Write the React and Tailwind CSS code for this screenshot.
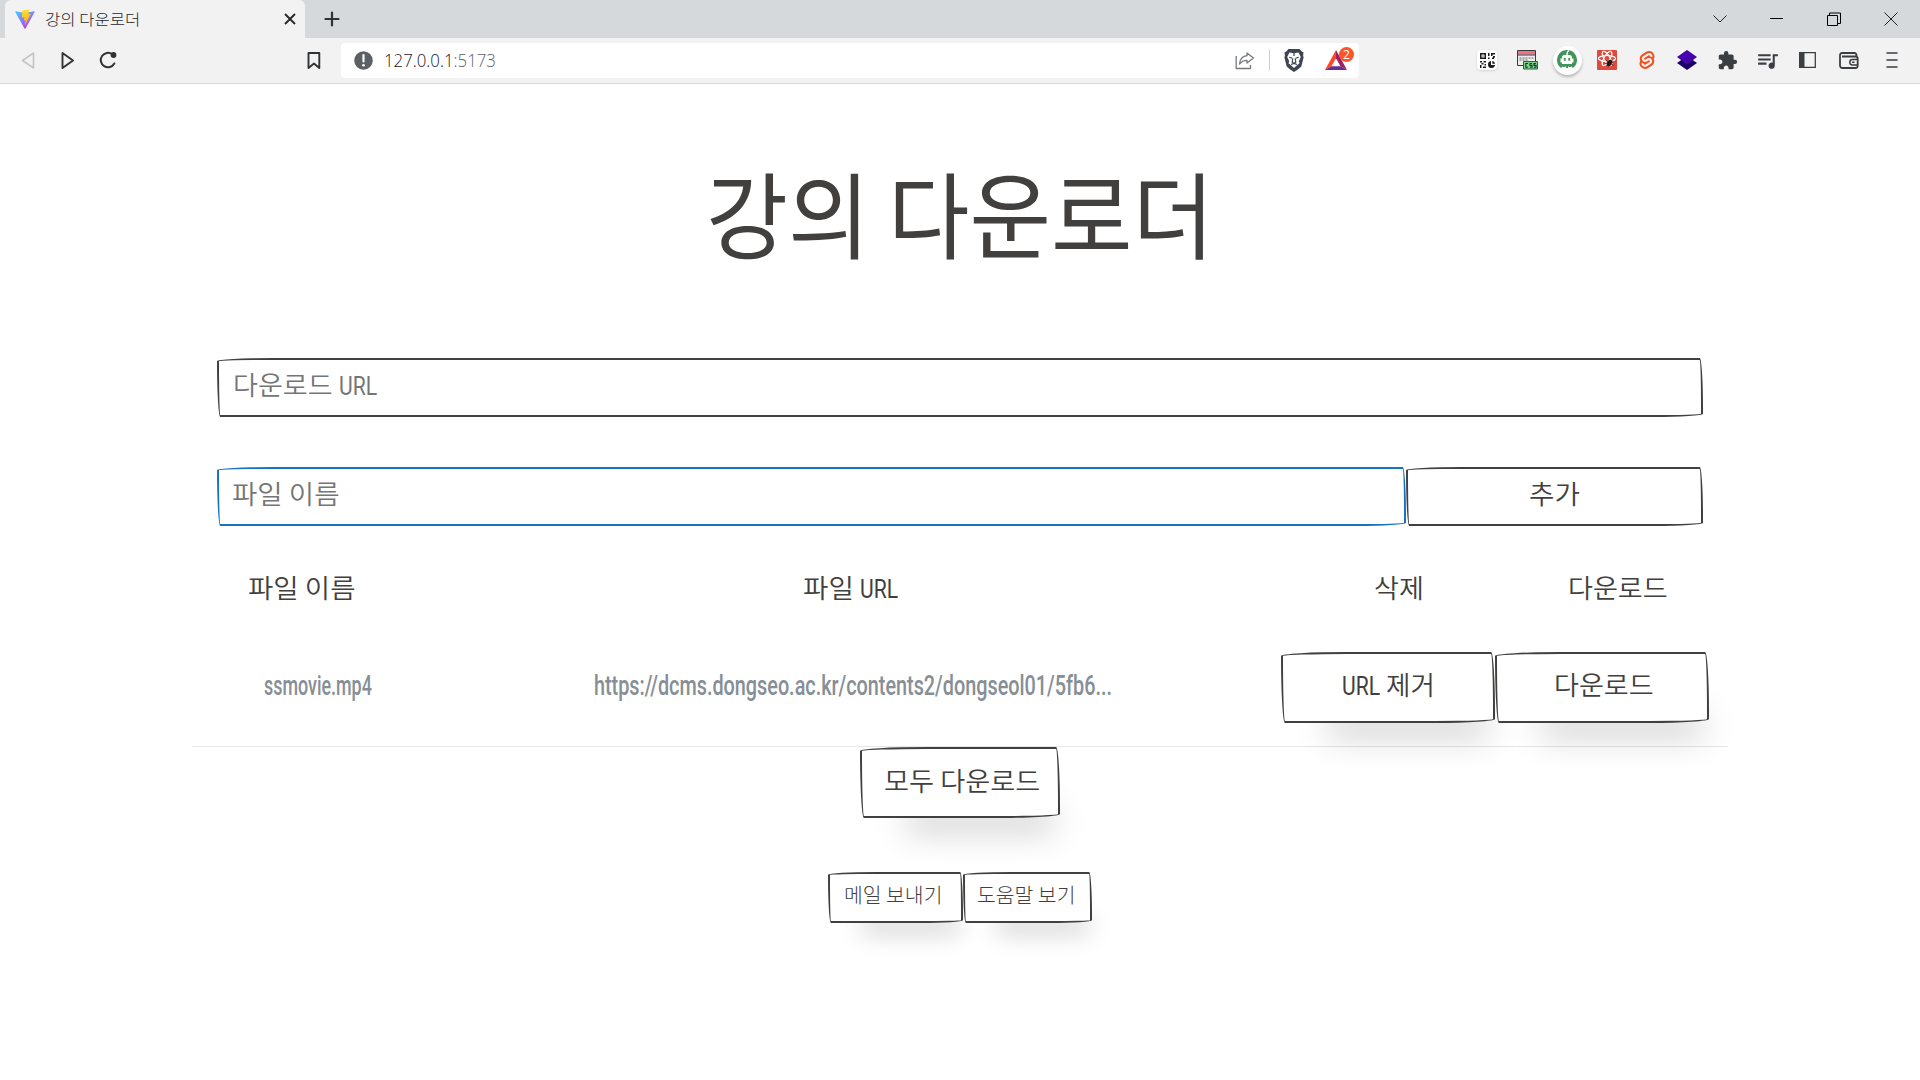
import { useLayoutEffect, useRef } from 'react';
import { SiSvelte } from 'react-icons/si';
import { MdExtension, MdQueueMusic } from 'react-icons/md';

const SKETCH = 'border-2 border-[#41403e] rounded-[255px_15px_225px_15px/15px_225px_15px_255px] bg-white';
const SHADOW = 'shadow-[15px_28px_25px_-18px_rgba(0,0,0,0.2)]';
const SHADOW_LARGE = 'shadow-[20px_38px_34px_-26px_rgba(0,0,0,0.24)]';

/* A single line of text condensed or widened to a given width. */
function Fit({ w, className = '', children }) {
  const ref = useRef(null);
  useLayoutEffect(() => {
    const el = ref.current;
    el.style.transform = `scaleX(${w / el.offsetWidth})`;
  }, [w]);
  return (
    <span className={`block shrink-0 ${className}`} style={{ width: w }}>
      <span ref={ref} className="inline-block origin-left whitespace-pre align-top">{children}</span>
    </span>
  );
}

const KO = "font-['Noto_Sans_CJK_KR',sans-serif] leading-none";
const LATIN = "font-[Roboto,sans-serif] leading-none";

function Ko({ w, children, className = '' }) {
  return <Fit w={w} className={`${KO} text-[26px] font-[350] pb-[2px] ${className}`}>{children}</Fit>;
}

function Url() {
  return <Fit w={38} className={`${LATIN} text-[25px] pt-[2px]`}>URL</Fit>;
}

function Cell({ children, className = 'w-10' }) {
  return <div className={`flex h-full shrink-0 items-center justify-center ${className}`}>{children}</div>;
}

function ViteLogo() {
  return (
    <svg width="20" height="20" viewBox="0 0 32 32">
      <defs>
        <linearGradient id="va" x1="0" y1="0" x2="0.6" y2="1"><stop stopColor="#41D1FF" /><stop offset="1" stopColor="#BD34FE" /></linearGradient>
        <linearGradient id="vb" x1="0" y1="0" x2="0" y2="1"><stop stopColor="#FFEA83" /><stop offset="0.1" stopColor="#FFDD35" /><stop offset="1" stopColor="#FFA800" /></linearGradient>
      </defs>
      <path fill="url(#va)" d="M31.2 5 16.8 31a.9.9 0 0 1-1.6 0L.6 5a.9.9 0 0 1 1-1.300l14.300 2.600h.3L30.200 3.700a.9.9 0 0 1 1 1.300Z" />
      <path fill="url(#vb)" d="M22.600 0 12 2.100a.4.4 0 0 0-.3.4L11 13.600c0 .3.2.5.5.4l3-.7c.3 0 .5.200.5.5l-.9 4.300c0 .3.200.5.5.4l1.800-.5c.3-.1.6.200.5.5l-1.400 6.800c-.1.4.5.7.7.3l.2-.3 8.700-17.300c.1-.3-.1-.6-.4-.5l-3.100.6c-.3 0-.5-.2-.5-.5L23 .5c.1-.3-.1-.5-.4-.5Z" />
    </svg>
  );
}

function TabBar() {
  return (
    <div className="flex h-[38px] bg-[#d5d9dc] pl-[5px]">
      <div className="flex w-[300px] items-center rounded-t-md bg-[#f2f2f2] pl-[10px]">
        <ViteLogo />
        <Fit w={95} className={`${KO} ml-[10px] pb-[2px] text-[15px] font-light text-[#25272c]`}>강의 다운로더</Fit>
        <svg className="ml-auto mr-[9px]" width="12" height="12" viewBox="0 0 12 12" stroke="#25282b" strokeWidth="1.9"><path d="M1 1 11 11M11 1 1 11" /></svg>
      </div>
      <Cell className="w-[54px]"><svg width="16" height="16" viewBox="0 0 16 16" stroke="#303336" strokeWidth="2.2" strokeLinecap="round"><path d="M1.500 8h13M8 1.500v13" /></svg></Cell>
      <div className="ml-auto flex">
        <Cell className="w-[57px]"><svg width="14" height="14" viewBox="0 0 14 14" fill="none" stroke="#222"><path d="m.5 3.500 6.500 6.500 6.500-6.500" /></svg></Cell>
        <Cell className="w-[57px]"><svg width="14" height="14" viewBox="0 0 14 14" stroke="#000"><path d="M0 6.500h13" /></svg></Cell>
        <Cell className="w-[57px]"><svg width="14" height="14" viewBox="0 0 14 14" fill="none" stroke="#000"><path d="M.5 3.500h10v10H.5zM2.500 3.500v-2.500h11v10.500h-3" /></svg></Cell>
        <Cell className="w-[58px]"><svg width="14" height="14" viewBox="0 0 14 14" stroke="#222"><path d="m.5.500 13 13M13.500.500l-13 13" /></svg></Cell>
      </div>
    </div>
  );
}

function AddressBar() {
  return (
    <div className="ml-[7px] flex h-[35px] w-[1018px] shrink-0 items-center rounded bg-white pl-[13px]">
      <svg width="19" height="19" viewBox="0 0 19 19"><circle cx="9.500" cy="9.500" r="9.300" fill="#5b5f66" /><path d="M9.500 4v6.500" stroke="#fff" strokeWidth="2.200" strokeLinecap="round" /><circle cx="9.500" cy="14.200" r="1.300" fill="#fff" /></svg>
      <Fit w={112} className="ml-[11px] pb-[1px] font-['Open_Sans',sans-serif] text-[18px] font-light leading-none text-[#1d2023]">127.0.0.1<span className="text-[#606367]">:5173</span></Fit>
      <svg className="ml-auto" width="20" height="19" viewBox="0 0 20 19" fill="none" stroke="#777a7d" strokeWidth="1.300" strokeLinejoin="round"><path d="M1.200 5v12.500h14.300V14" /><path d="M12 2l6.500 5-6.500 5V9.300C8.500 9.300 6.500 10.500 4.500 13 5 8.500 7.500 5 12 4.700Z" /></svg>
      <span className="ml-[14px] h-5 w-px bg-[#c9cbcd]" />
      <span className="ml-[14px] flex h-[23px] w-5 items-center justify-center">
        <svg width="20" height="23" viewBox="0 0 20 23">
          <path fill="#3f4352" d="M4.500 0h11L18 2.700l1.500.5-.4 3.500.5 1.800-2.300 9L14.500 20 10 23l-4.500-3-2.800-2.500-2.300-9 .5-1.800-.4-3.500L2 2.700Z" />
          <path fill="#fff" d="m5.500 3.500 4.500.7 4.500-.7 2.300 4.500-2 4.200.7 2-3 2.600L10 19l-2.500-2.200-3-2.600.7-2-2-4.200Z" />
          <path stroke="#3f4352" strokeWidth="1.200" fill="none" d="m5.300 8.200 3 1.100M14.700 8.200l-3 1.100M8.800 9.500l-.6 3.500L10 14.500l1.800-1.500-.6-3.500M7 15.500l3-1 3 1M10 4v3" />
        </svg>
      </span>
      <span className="relative ml-[21px] mr-[12px] flex h-[34px] w-[22px] items-center">
        <svg width="22" height="20" viewBox="0 0 22 20"><path d="M11 0 0 20l6.500-3.800L11 8.300Z" fill="#ff4724" /><path d="M0 20h22l-6.500-3.800h-9Z" fill="#662d91" /><path d="M22 20 11 0v8.300l4.500 7.900Z" fill="#9e1f63" /></svg>
        <span className="absolute left-[14px] top-[4px] flex h-[15px] w-[15px] items-center justify-center rounded-full bg-[#fb542b] font-['Open_Sans',sans-serif] text-[12px] leading-none text-white">2</span>
      </span>
    </div>
  );
}

function Extensions() {
  return (
    <div className="ml-auto flex h-full text-[#3b3e41]">
      <Cell>
        <span className="flex h-5 w-5 items-center justify-center rounded-sm bg-white shadow-sm">
          <svg width="15" height="15" viewBox="0 0 15 15" fill="#1c1c1c"><path d="M0 0h6v6H0zM1.500 1.500v3h3v-3z" fillRule="evenodd" /><path d="M2.400 2.400h1.200v1.200H2.400zM8 0h1.500v3H8zM11 0h4v1.500h-2.500V3H11zM8 4.500h1.500V6H8zM13 3h2v1.500h-1V6h-2V4.500h1zM0 8h2v1.500H0zM3.500 8H6v1.500H3.500zM1.500 10h2v1.500h-2zM0 12h1.500v3H0zM3 13.500h3V15H3zM4.500 11H6v1.500H4.500z" /><path d="M11 8v4h4a3.500 3.500 0 1 1-4-4Z" /><path d="M12.300 8A3 3 0 0 1 15 10.700h-2.700z" /></svg>
        </span>
      </Cell>
      <Cell>
        <svg width="21" height="21" viewBox="0 0 21 21"><path fill="#ececec" stroke="#3a3a3a" d="M.5.500h18v15H.5z" /><path fill="#e8738a" d="M1 1h17v3.500H1z" /><path stroke="#3a3a3a" d="M1 5h17" /><path d="M2.500 8h14M2.500 10h8" stroke="#666" strokeDasharray="2 1" /><path fill="#7ad08a" stroke="#2c6637" d="M6.500 11.500h14v7.500h-14z" /><path stroke="#173d20" strokeWidth="1.100" fill="none" d="M11 13.500H8.800v3.800H11M15 13.500h-2v1.900h2v1.900h-2M19 13.500h-2v1.900h2v1.900h-2" /></svg>
      </Cell>
      <Cell>
        <span className="flex h-[29px] w-[29px] items-center justify-center rounded-full bg-white shadow-[0_2px_3px_rgba(0,0,0,0.25)]">
          <svg width="20" height="20" viewBox="0 0 20 20"><path fill="#43945a" d="M4 18A10 10 0 1 1 16 18l-1.500-1.500H5.500Z" /><path fill="#fff" d="M9.300 5c0-2.500 1-4.500 2.300-5l.8.8c-1 .7-1.700 2-1.700 4.200h1.800a2.500 2.500 0 0 1 2.500 2.500V8.500h1.500v4H15V14H5v-1.500H3.500v-4H5v-1A2.500 2.500 0 0 1 7.500 5Z" /><path fill="#43945a" d="M6.800 8h1.900v2.800H6.800zM11.300 8h1.900v2.800h-1.900zM6 15.500h2V17H6zM9 15.500h2V18H9zM12 15.500h2V17h-2z" /></svg>
        </span>
      </Cell>
      <Cell>
        <svg width="20" height="20" viewBox="0 0 20 20"><rect width="20" height="20" rx="1" fill="#dd4b3e" /><g fill="none" stroke="#fff" strokeWidth="1.100"><ellipse cx="10" cy="8.500" rx="8.500" ry="3" /><ellipse cx="10" cy="8.500" rx="8" ry="3" transform="rotate(60 10 8.500)" /><ellipse cx="10" cy="8.500" rx="8" ry="3" transform="rotate(120 10 8.500)" /></g><ellipse cx="12.500" cy="13" rx="2.300" ry="3.500" fill="#28150f" transform="rotate(30 12.500 13)" /><path d="m9 10.500 7.500 5M9.500 16l6-6M8.500 13.500l8-1.500" stroke="#28150f" strokeWidth=".8" /></svg>
      </Cell>
      <Cell><SiSvelte size={18} color="#f1501f" /></Cell>
      <Cell><svg width="20" height="20" viewBox="0 0 20 20"><path d="m10 6 10 7-10 7-10-7Z" fill="#1c0066" /><path d="m10 0 10 7-10 7.500L0 7Z" fill="#4502ad" /></svg></Cell>
      <Cell><MdExtension size={21} /></Cell>
      <Cell><MdQueueMusic size={25} /></Cell>
      <Cell><svg width="17" height="16" viewBox="0 0 17 16"><path d="M.7.700h15.600v14.600H.7z" fill="none" stroke="currentColor" strokeWidth="1.300" /><path d="M0 0h5.500v16H0z" fill="currentColor" /></svg></Cell>
      <Cell className="w-[44px]"><svg width="20" height="17" viewBox="0 0 20 17" fill="none" stroke="currentColor" strokeWidth="1.800"><path d="M17.500 4.500V3a2 2 0 0 0-2-2H3a2 2 0 0 0-2 2v10.500A2.500 2.500 0 0 0 3.500 16h13a2.200 2.200 0 0 0 2.200-2.200V6.700a2.200 2.200 0 0 0-2.200-2.200H3" /><path d="M19 7.500h-5.500a2.700 2.700 0 0 0 0 5.400H19M13 10.200h2.500" strokeWidth="1.500" /></svg></Cell>
      <Cell className="w-[42px]"><svg width="12" height="16" viewBox="0 0 12 16" stroke="currentColor" strokeWidth="1.700"><path d="M.5 1h11M.5 8h11M.5 15h11" /></svg></Cell>
      <span className="w-[7px]" />
    </div>
  );
}

function Toolbar() {
  return (
    <div className="flex h-[46px] items-center border-b border-[#d5d7d9] bg-[#f2f2f2] pb-[1px] pl-2 text-[#303336]">
      <Cell><svg width="14" height="17" viewBox="0 0 14 17" fill="none" stroke="#c3c4c5" strokeWidth="1.600" strokeLinejoin="round"><path d="M12.500 1v15L1.500 8.500Z" /></svg></Cell>
      <Cell><svg width="14" height="17" viewBox="0 0 14 17" fill="none" stroke="currentColor" strokeWidth="1.900" strokeLinejoin="round"><path d="M1.500 1v15l10.500-7.500Z" /></svg></Cell>
      <Cell><svg width="18" height="18" viewBox="0 0 18 18"><path d="M15.300 12.500a7.200 7.200 0 1 1-2-9.200" fill="none" stroke="currentColor" strokeWidth="2" strokeLinecap="round" /><circle cx="14.500" cy="4" r="2.900" fill="currentColor" /></svg></Cell>
      <Cell className="ml-[166px] w-10"><svg width="14" height="17" viewBox="0 0 14 17" fill="none" stroke="currentColor" strokeWidth="1.900" strokeLinejoin="round"><path d="M1.500 1h10.800v15L7 11.500 1.500 16Z" /></svg></Cell>
      <AddressBar />
      <Extensions />
    </div>
  );
}

export default function App() {
  return (
    <div className="h-[1080px] w-[1920px] overflow-hidden bg-white text-[#41403e]">
      <TabBar />
      <Toolbar />
      <main className="mx-auto w-[1536px]">
        <h1 className={`${KO} flex h-[274px] justify-center gap-[18px] pt-[80px] text-[94px] font-normal`}>
          <Fit w={164}>강의</Fit>
          <Fit w={326}>다운로더</Fit>
        </h1>

        <div className="px-[25px]">
          <div className={`flex h-[59px] items-center gap-[6px] pb-[5px] pl-[14px] text-[#757575] ${SKETCH}`}>
            <Ko w={100}>다운로드</Ko>
            <Url />
          </div>
          <div className="mt-[50px] flex">
            <div className="flex h-[59px] w-[1189px] items-center rounded-[255px_15px_225px_15px/15px_225px_15px_255px] border-2 border-[#1971c2] bg-white pb-[5px] pl-[13px] text-[#757575]">
              <Ko w={107}>파일 이름</Ko>
            </div>
            <button className={`flex h-[59px] w-[297px] items-center justify-center pb-[5px] pr-[3px] ${SKETCH}`}><Ko w={51}>추가</Ko></button>
          </div>
        </div>

        <div className="mt-[36px] grid h-[52px] grid-cols-[1fr_4fr_1fr_1fr] items-center justify-items-center">
          <Ko w={107}>파일 이름</Ko>
          <div className="flex items-center gap-[6px]"><Ko w={51}>파일</Ko><Url /></div>
          <Ko w={50}>삭제</Ko>
          <Ko w={100}>다운로드</Ko>
        </div>

        <div className="grid h-[133px] grid-cols-[251px_819px_466px] justify-items-center border-b border-[#e6e7e9] pt-[38px] text-[#868e96]">
          <Fit w={108} className={`${LATIN} h-[71px] pt-[21px] text-[27px] font-medium`}>ssmovie.mp4</Fit>
          <Fit w={518} className={`${LATIN} h-[71px] pt-[21px] text-[27px] font-medium`}>https://dcms.dongseo.ac.kr/contents2/dongseol01/5fb6...</Fit>
          <div className="flex text-[#41403e]">
            <button className={`flex h-[71px] w-[214px] items-center justify-center gap-[6px] pb-[5px] ${SKETCH} ${SHADOW_LARGE}`}><Url /><Ko w={49}>제거</Ko></button>
            <button className={`flex h-[71px] w-[214px] items-center justify-center pb-[5px] pr-[1px] ${SKETCH} ${SHADOW_LARGE}`}><Ko w={100}>다운로드</Ko></button>
          </div>
        </div>

        <div className="flex justify-center">
          <button className={`flex h-[71px] w-[200px] items-center pb-[4px] pl-[19px] ${SKETCH} ${SHADOW_LARGE}`}><Ko w={156}>모두 다운로드</Ko></button>
        </div>
        <div className="mt-[54px] flex justify-center">
          <button className={`flex h-[51px] w-[135px] items-center pb-[5px] pl-[13px] ${SKETCH} ${SHADOW}`}><Fit w={98} className={`${KO} text-[20px] font-light`}>메일 보내기</Fit></button>
          <button className={`flex h-[51px] w-[129px] items-center pb-[5px] pl-[11px] ${SKETCH} ${SHADOW}`}><Fit w={98} className={`${KO} text-[20px] font-light`}>도움말 보기</Fit></button>
        </div>
      </main>
    </div>
  );
}
